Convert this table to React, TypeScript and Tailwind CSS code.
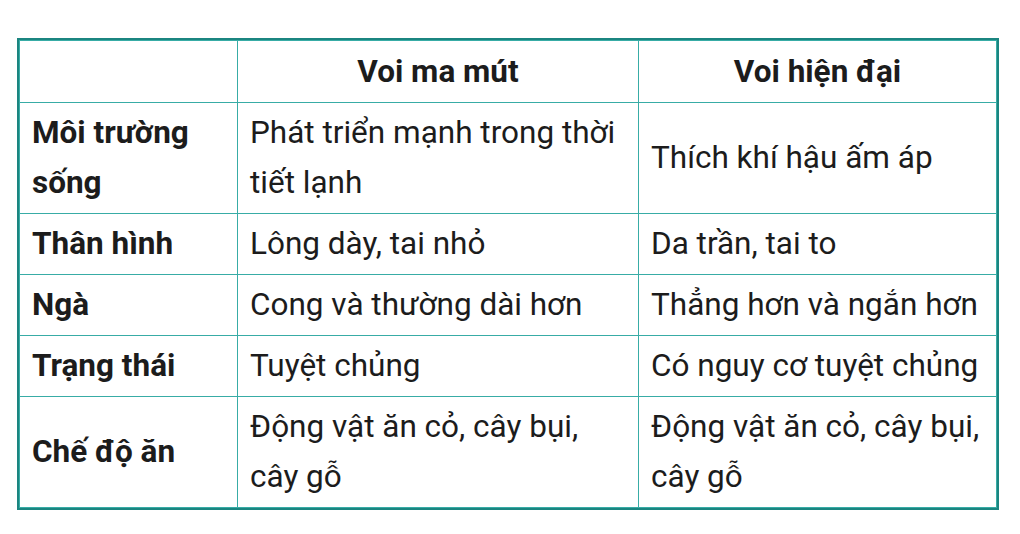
import React from 'react';

const rows: { label: string; a: string; b: string }[] = [
  { label: 'Môi trường sống', a: 'Phát triển mạnh trong thời tiết lạnh', b: 'Thích khí hậu ấm áp' },
  { label: 'Thân hình', a: 'Lông dày, tai nhỏ', b: 'Da trần, tai to' },
  { label: 'Ngà', a: 'Cong và thường dài hơn', b: 'Thẳng hơn và ngắn hơn' },
  { label: 'Trạng thái', a: 'Tuyệt chủng', b: 'Có nguy cơ tuyệt chủng' },
  { label: 'Chế độ ăn', a: 'Động vật ăn cỏ, cây bụi, cây gỗ', b: 'Động vật ăn cỏ, cây bụi, cây gỗ' },
];

export default function App() {
  return (
    <div
      className="w-[1020px] h-[534px] bg-white pt-[38px] pl-[17px]"
      style={{ fontFamily: 'Roboto, "Noto Sans", sans-serif' }}
    >
      <div className="w-[982px] border-2 border-[#1b8580]">
        <table className="w-full border-collapse table-fixed text-[31.5px] leading-[50px] text-[#1c1c1c]">
          <colgroup>
            <col className="w-[218px]" />
            <col className="w-[401px]" />
            <col />
          </colgroup>
          <thead>
            <tr className="h-[62px]">
              <th className="border border-[#38aca6]" />
              <th className="border border-[#38aca6] px-3 font-bold text-center">Voi ma mút</th>
              <th className="border border-[#38aca6] px-3 font-bold text-center">Voi hiện đại</th>
            </tr>
          </thead>
          <tbody>
            {rows.map((r) => (
              <tr key={r.label}>
                <td className="border border-[#38aca6] px-3 py-[5px] font-bold align-middle">{r.label}</td>
                <td className="border border-[#38aca6] px-3 py-[5px] align-middle">{r.a}</td>
                <td className="border border-[#38aca6] px-3 py-[5px] align-middle">{r.b}</td>
              </tr>
            ))}
          </tbody>
        </table>
      </div>
    </div>
  );
}
